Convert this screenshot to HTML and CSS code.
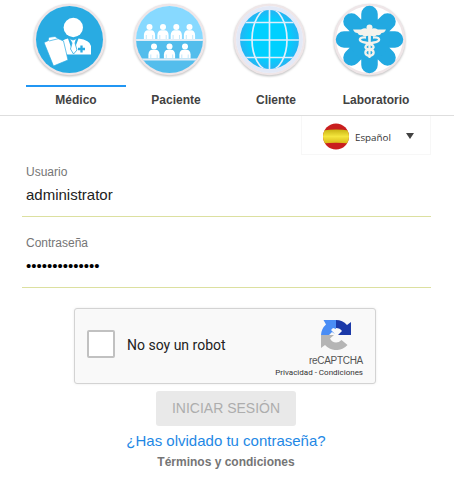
FILE: index.html
```html
<!DOCTYPE html>
<html lang="es">
<head>
<meta charset="utf-8">
<title>Iniciar sesión</title>
<link rel="stylesheet" href="styles.css">
</head>
<body>
<nav class="tabs">
  <a class="tab active">
    <svg class="badge" viewBox="0 0 76 79">
      <circle class="rim" cx="38.5" cy="39.5" r="34.5"/>
      <circle cx="38.5" cy="39.5" r="33.5" fill="#29abe2"/>
      <circle cx="42.3" cy="27.5" r="9.7" fill="#fff"/>
      <path d="M29 44 Q31 39.5 37 38.5 L42 53 L47.500 38.500 Q59 40 60 46 V54.500 H33Z" fill="#fff"/>
      <path d="M38.500 38.500 L42 40 L45.500 38.500 L44 43 L46 50 L42.500 54 L39.500 49 L41 43Z" fill="#fff" stroke="#29abe2" stroke-width=".8"/>
      <path d="M50.500 45.500v7M47 49h7" stroke="#29abe2" stroke-width="2.300"/>
      <path d="M13 42.500 L17.500 40.500 Q16.500 37 20 37 L24 36.500 L28 39 L32.500 41 L37 60 L22.500 66Z" fill="#fff" stroke="#29abe2" stroke-width=".7"/>
      <path d="M18 41 L28 38.500" stroke="#29abe2" stroke-width=".7"/>
    </svg>
    <span class="tab-label">Médico</span>
  </a>
  <a class="tab">
    <svg class="badge" viewBox="0 0 76 79">
      <defs>
        <clipPath id="disc"><circle cx="38.500" cy="39.500" r="33.500"/></clipPath>
        <g id="person">
          <circle cx="0" cy="-12" r="3"/>
          <path d="M-5.600 0 V-4 Q-5.300 -8.800 -1.500 -8.800 H1.500 Q5.300 -8.800 5.600 -4 V0Z"/>
          <path d="M-3.200 0V-4M3.200 0V-4" stroke="#a9def8" stroke-width=".7"/>
        </g>
      </defs>
      <circle class="rim" cx="38.500" cy="39.500" r="34.500"/>
      <g clip-path="url(#disc)">
        <path d="M0 0H76V40H0Z" fill="#87d9ff"/>
        <path d="M0 40H76V79H0Z" fill="#53bdec"/>
        <g fill="#fff">
          <use href="#person" x="18.500" y="39"/><use href="#person" x="32" y="39"/>
          <use href="#person" x="45.300" y="39"/><use href="#person" x="58.500" y="39"/>
          <use href="#person" x="23" y="58.500"/><use href="#person" x="38.500" y="58.500"/>
          <use href="#person" x="54" y="58.500"/>
        </g>
        <path d="M0 40H76M0 59.500H76" stroke="#e0edf7" stroke-width="2"/>
      </g>
    </svg>
    <span class="tab-label">Paciente</span>
  </a>
  <a class="tab">
    <svg class="badge" viewBox="0 0 76 79">
      <defs>
        <radialGradient id="sea"><stop offset=".65" stop-color="#00d0ff"/><stop offset="1" stop-color="#25b4f3"/></radialGradient>
        <clipPath id="globe"><circle cx="38.500" cy="39.500" r="29.500"/></clipPath>
      </defs>
      <circle class="rim" cx="38.500" cy="39.500" r="34.500"/>
      <circle cx="38.500" cy="39.500" r="33.500" fill="#e3e9f7"/>
      <circle cx="38.500" cy="39.500" r="29.500" fill="url(#sea)"/>
      <g clip-path="url(#globe)" fill="none" stroke="#e0eefb" stroke-width="1.700">
        <path d="M38.500 8V72M8 40H70M8 22.500H70M8 57.500H70"/>
        <ellipse cx="38.500" cy="39.500" rx="17.500" ry="31"/>
      </g>
    </svg>
    <span class="tab-label">Cliente</span>
  </a>
  <a class="tab">
    <svg class="badge" viewBox="0 0 76 79">
      <circle class="rim" cx="38.500" cy="39.500" r="34.500"/>
      <g stroke="#22a9e1" stroke-width="16.500" stroke-linecap="round">
        <path d="M38.500 14V65M13 39.500H64M20.500 21.500L56.500 57.500M56.500 21.500L20.500 57.500"/>
      </g>
      <circle cx="38.500" cy="39.500" r="20" fill="#22a9e1"/>
      <g fill="#f5f3ec">
        <circle cx="38.500" cy="27.500" r="3"/>
        <path d="M38 30 Q35 27 30 29.500 L22 29.500 Q23.500 33 26.500 33 Q28 36 31 35 Q34 37.500 38.500 35 Q43 37.500 46 35 Q49 36 50.500 33 Q53.500 33 55 29.500 L47 29.500 Q42 27 39 30Z"/>
        <path d="M37 29H40L39.500 58H37.500Z"/>
      </g>
      <path d="M35 37.500C27 37 27 41.500 34 42.500C44 44 45 49 38.500 49.500C33 50 33 55 38.500 56M42 37.500C50 37 50 41.500 43 42.500C33 44 32 49 38.500 49.500C44 50 44 55 38.500 56" fill="none" stroke="#f5f3ec" stroke-width="2.300"/>
    </svg>
    <span class="tab-label">Laboratorio</span>
  </a>
</nav>
<main class="login">
  <div class="language">
    <svg class="flag" viewBox="0 0 26 27">
      <defs>
        <clipPath id="flagDisc"><circle cx="13" cy="13.500" r="13"/></clipPath>
        <linearGradient id="gold" x2="0" y2="1"><stop stop-color="#c9b414"/><stop offset=".5" stop-color="#f4e63e"/><stop offset="1" stop-color="#d8b716"/></linearGradient>
      </defs>
      <g clip-path="url(#flagDisc)">
        <path d="M0 0H26V27H0Z" fill="#c91e1e"/>
        <path d="M0 7.500 Q13 5.500 26 7.500V20.500Q13 19 0 20.500Z" fill="url(#gold)"/>
      </g>
    </svg>
    <span class="language-name">Español</span>
    <i class="caret"></i>
  </div>
  <label class="field user">
    <span class="field-label">Usuario</span>
    <span class="field-value">administrator</span>
  </label>
  <label class="field password">
    <span class="field-label">Contraseña</span>
    <span class="field-value dots">••••••••••••••</span>
  </label>
  <section class="captcha">
    <span class="checkbox"></span>
    <span class="captcha-text">No soy un robot</span>
    <div class="captcha-brand">
      <svg class="captcha-logo" viewBox="0 0 30 30">
        <path d="M0 15 A15 15 0 0 1 5 4.500 L2.500 0 H15 V9 L12 8 L10 10 L14 14 L11 12 L8 15Z" fill="#4a8df5"/>
        <path d="M15 0 A15 15 0 0 1 26 5 L30 2 V15 H17 L21 11 Q19 8 15 8Z" fill="#1c3aa9"/>
        <path d="M0 15 H13 L9 18.500 Q11 22.500 15 22.500 Q18 22.500 20.500 20 L26.500 25 A15 15 0 0 1 4 25 L0 28Z" fill="#b5b5b5"/>
      </svg>
      <span class="captcha-name">reCAPTCHA</span>
      <span class="captcha-links">Privacidad - Condiciones</span>
    </div>
  </section>
  <button class="submit" disabled>INICIAR SESIÓN</button>
  <a class="forgot">¿Has olvidado tu contraseña?</a>
  <a class="terms">Términos y condiciones</a>
</main>
</body>
</html>
```
FILE: styles.css
```css
* { box-sizing: border-box; }
body {
  margin: 0;
  background: #fff;
  font-family: "Liberation Sans", Arial, sans-serif;
  color: #222;
  height: 483px;
  overflow: hidden;
}
.tabs {
  display: flex;
  height: 116px;
  padding-left: 26px;
  border-bottom: 1px solid #dedede;
}
.tab {
  display: flex;
  flex-direction: column;
  width: 100px;
}
.badge {
  width: 76px;
  height: 79px;
  margin: 0 0 6px 5px;
}
.rim {
  fill: #fff;
  stroke: #efe6e8;
  stroke-width: 2.5;
  filter: drop-shadow(0 1px 1px #bbb);
}
.tab-label {
  height: 30px;
  border-top: 2px solid transparent;
  padding-top: 5px;
  font-size: 12px;
  font-weight: 700;
  line-height: 16px;
  text-align: center;
  color: #424242;
}
.active .tab-label { border-color: #2196f3; }
.login {
  display: flex;
  flex-direction: column;
  align-items: center;
  width: 409px;
  margin-left: 22px;
}
.language {
  align-self: flex-end;
  display: flex;
  align-items: center;
  width: 130px;
  height: 39px;
  padding: 3px 0 0 21px;
  border: 1px solid #f7f7f7;
  border-top: 0;
}
.flag { width: 26px; height: 27px; }
.language-name {
  width: 52px;
  margin: 2px 0 0 6px;
  font: 9.8px/14px "Open Sans", sans-serif;
  color: #333;
}
.caret {
  border: 4px solid transparent;
  border-top: 6px solid #424242;
  border-bottom: 0;
  margin: -2px 0 0 -1px;
}
.field {
  display: flex;
  flex-direction: column;
  width: 100%;
  padding-left: 4px;
  border-bottom: 1px solid #dce0a0;
}
.user { height: 62px; padding-top: 9px; }
.password { height: 71px; padding-top: 18px; }
.field-label {
  font-size: 12px;
  line-height: 16px;
  color: #757575;
}
.field-value {
  margin-top: 6px;
  font-size: 15px;
  line-height: 18px;
}
.dots { color: #000; }
.captcha {
  display: flex;
  align-items: center;
  width: 302px;
  height: 76px;
  margin: 20px 3px 0 0;
  padding: 0 12px;
  border: 1px solid #d3d3d3;
  border-radius: 3px;
  background: #f9f9f9;
  box-shadow: 0 0 3px rgba(0, 0, 0, .08);
}
.checkbox {
  width: 28px;
  height: 28px;
  margin-top: -4px;
  border: 2px solid #c1c1c1;
  border-radius: 2px;
  background: #fff;
}
.captcha-text {
  margin: -2px 0 0 12px;
  font: 14px/18px Roboto, sans-serif;
  color: #222;
}
.captcha-brand {
  display: flex;
  flex-direction: column;
  align-items: flex-end;
  margin: 7px 0 0 auto;
  font-family: Roboto, sans-serif;
  color: #555;
}
.captcha-logo {
  width: 30px;
  height: 30px;
  margin: 0 12px 4px 0;
}
.captcha-name {
  font: 10px/13px "Liberation Sans", Arial, sans-serif;
  letter-spacing: -.3px;
}
.captcha-links { font-size: 8px; line-height: 12px; color: #333; }
.submit {
  width: 140px;
  height: 35px;
  margin: 7px 1px 5px 0;
  padding: 0;
  border: 0;
  border-radius: 3px;
  background: #e9e9e9;
  font: 14px/35px "Liberation Sans", Arial, sans-serif;
  color: #adadad;
}
.forgot {
  margin-right: 1px;
  font-size: 15px;
  line-height: 20px;
  color: #1e88e5;
}
.terms {
  margin: 3px 1px 0 0;
  font-size: 12px;
  font-weight: 700;
  line-height: 16px;
  color: #757575;
}
```
